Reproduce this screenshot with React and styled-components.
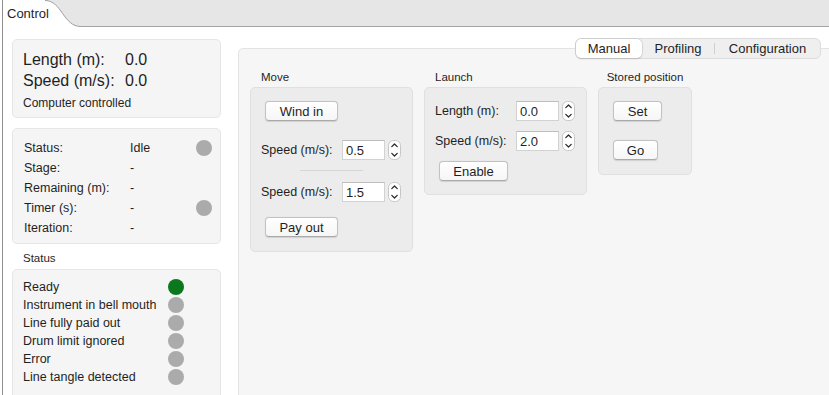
import React from 'react';
import styled, { createGlobalStyle } from 'styled-components';

const GlobalStyle = createGlobalStyle`
  html, body {
    margin: 0;
    padding: 0;
    background: #fff;
    overflow: hidden;
  }
  body {
    font-family: "Liberation Sans", Arial, sans-serif;
    color: #1f1f1f;
  }
  * { box-sizing: border-box; }
`;

const Window = styled.div`
  display: flex;
  flex-direction: column;
  height: 100vh;
  margin-left: 2px;
  border-left: 1px solid #8e8e8e;
`;

const TabStrip = styled.div`
  display: flex;
  height: 27px;
  background: #e6e6e6;
  flex-shrink: 0;
`;

const ActiveTab = styled.div`
  position: relative;
  z-index: 1;
  width: 42px;
  background: #fff;
  padding-left: 4px;
  font-size: 13px;
  line-height: 28px;
  white-space: nowrap;
`;

const TabFiller = styled.div`
  flex: 1;
  border-bottom: 1px solid #a3a3a3;
`;

const Content = styled.div`
  flex: 1;
  display: flex;
  gap: 17px;
  padding: 12px 0 0 9px;
  min-height: 0;
`;

const LeftColumn = styled.div`
  width: 209px;
  display: flex;
  flex-direction: column;
  gap: 10px;
`;

const Card = styled.div`
  background: #f5f5f5;
  border: 1px solid #e6e6e6;
  border-radius: 5px;
  padding: ${({ $pad }) => $pad};
  ${({ $grow }) => $grow && 'flex: 1; margin-bottom: -12px;'}
`;

const Readout = styled.div`
  display: grid;
  grid-template-columns: 102px auto;
  font-size: 16px;
  line-height: 21px;
`;

const Note = styled.div`
  font-size: 12px;
  line-height: 15px;
  margin-top: 5px;
`;

const InfoGrid = styled.div`
  display: grid;
  grid-template-columns: 106px 1fr 16px;
  grid-auto-rows: 20px;
  align-items: center;
  font-size: 12.5px;
`;

const Dot = styled.span`
  display: block;
  width: 16px;
  height: 16px;
  border-radius: 50%;
  background: ${({ $on }) => ($on ? '#0b781d' : '#ababab')};
`;

const SectionLabel = styled.div`
  font-size: 11.5px;
  line-height: 14px;
  padding-left: 11px;
  margin: -3px 0 -6px;
`;

const FlagGrid = styled.div`
  display: grid;
  grid-template-columns: 145px 16px;
  grid-auto-rows: 18px;
  align-items: center;
  font-size: 12.5px;
`;

const MainPanel = styled.div`
  flex: 1;
  margin: 9px -8px -12px 0;
  background: #f6f6f6;
  border: 1px solid #e3e3e3;
  border-radius: 5px;
  display: flex;
  flex-direction: column;
`;

const TopBar = styled.div`
  display: flex;
  justify-content: flex-end;
  margin-top: -11px;
  padding-right: 15px;
`;

const Segmented = styled.div`
  display: flex;
  align-items: center;
  height: 21px;
  background: #efefef;
  border: 1px solid #dcdcdc;
  border-radius: 6px;
`;

const Segment = styled.div`
  width: ${({ $w }) => $w}px;
  height: 19px;
  line-height: 19px;
  text-align: center;
  font-size: 13px;
  border-radius: 5px;
  ${({ $active }) =>
    $active &&
    `
    background: #fff;
    box-shadow: 0 0 0 0.5px #c4c4c4, 0 1px 1.5px rgba(0, 0, 0, 0.18);
  `}
`;

const SegmentDivider = styled.span`
  width: 1px;
  height: 11px;
  background: #cfcfcf;
`;

const Groups = styled.div`
  display: flex;
  align-items: flex-start;
  gap: 11px;
  padding: 11px 11px 0;
`;

const Group = styled.div`
  display: flex;
  flex-direction: column;
`;

const GroupLabel = styled.div`
  font-size: 11.5px;
  line-height: 14px;
  margin-bottom: 3px;
  padding-left: ${({ $center }) => ($center ? '0' : '11px')};
  text-align: ${({ $center }) => ($center ? 'center' : 'left')};
`;

const GroupBox = styled.div`
  width: ${({ $w }) => $w}px;
  background: #ececec;
  border: 1px solid #e0e0e0;
  border-radius: 5px;
  padding: 13px 10px ${({ $pb }) => $pb || 14}px;
  display: flex;
  flex-direction: column;
  align-items: flex-start;
`;

const Button = styled.button`
  width: ${({ $w }) => $w}px;
  height: 20px;
  margin: ${({ $mt }) => $mt || 0}px 0 0 4px;
  padding: 0;
  font-family: inherit;
  font-size: 13px;
  color: #1f1f1f;
  background: linear-gradient(#ffffff, #f6f6f6);
  border: 1px solid #c2c2c2;
  border-bottom-color: #aaaaaa;
  border-radius: 4px;
  box-shadow: 0 0.5px 1px rgba(0, 0, 0, 0.12);
`;

const FieldRow = styled.div`
  display: flex;
  align-items: center;
  margin-top: ${({ $mt }) => $mt || 0}px;
`;

const FieldLabel = styled.span`
  width: 81px;
  font-size: 12.5px;
`;

const NumberBox = styled.div`
  width: 43px;
  height: 20px;
  background: #fff;
  border: 1px solid #d2d2d2;
  border-top-color: #bdbdbd;
  padding: 0 3px;
  font-size: 13px;
  line-height: 19px;
`;

const Divider = styled.div`
  align-self: center;
  width: 63px;
  height: 1px;
  background: #d6d6d6;
  margin-top: 10px;
`;

const Stepper = () => (
  <svg width="13" height="20" viewBox="0 0 13 20" style={{ marginLeft: 3 }}>
    <rect x="0.5" y="0.5" width="12" height="19" rx="5" fill="#fff" stroke="#c6c6c6" />
    <path d="M3.8 6.6 L6.5 4 L9.2 6.6" fill="none" stroke="#2a2a2a" strokeWidth="1.3" strokeLinecap="round" strokeLinejoin="round" />
    <path d="M3.8 13.4 L6.5 16 L9.2 13.4" fill="none" stroke="#2a2a2a" strokeWidth="1.3" strokeLinecap="round" strokeLinejoin="round" />
  </svg>
);

const TabCurve = () => (
  <svg width="36" height="27" viewBox="0 0 36 27">
    <path d="M0 0 C17 0 18 26 36 26 V27 H0 Z" fill="#fff" />
    <path d="M0 0.5 C17 0.5 18 26.5 36 26.5" fill="none" stroke="#9c9c9c" />
  </svg>
);

const Field = ({ label, value, mt }) => (
  <FieldRow $mt={mt}>
    <FieldLabel>{label}</FieldLabel>
    <NumberBox>{value}</NumberBox>
    <Stepper />
  </FieldRow>
);

const info = [
  ['Status:', 'Idle', true],
  ['Stage:', '-', false],
  ['Remaining (m):', '-', false],
  ['Timer (s):', '-', true],
  ['Iteration:', '-', false],
];

const flags = [
  ['Ready', true],
  ['Instrument in bell mouth', false],
  ['Line fully paid out', false],
  ['Drum limit ignored', false],
  ['Error', false],
  ['Line tangle detected', false],
];

export default function App() {
  return (
    <>
      <GlobalStyle />
      <Window>
        <TabStrip>
          <ActiveTab>Control</ActiveTab>
          <TabCurve />
          <TabFiller />
        </TabStrip>
        <Content>
          <LeftColumn>
            <Card $pad="9px 10px 6px">
              <Readout>
                <span>Length (m):</span>
                <span>0.0</span>
                <span>Speed (m/s):</span>
                <span>0.0</span>
              </Readout>
              <Note>Computer controlled</Note>
            </Card>
            <Card $pad="9px 8px 5px 11px">
              <InfoGrid>
                {info.map(([label, value, dot]) => (
                  <React.Fragment key={label}>
                    <span>{label}</span>
                    <span>{value}</span>
                    {dot ? <Dot /> : <span />}
                  </React.Fragment>
                ))}
              </InfoGrid>
            </Card>
            <SectionLabel>Status</SectionLabel>
            <Card $pad="8px 10px" $grow>
              <FlagGrid>
                {flags.map(([label, on]) => (
                  <React.Fragment key={label}>
                    <span>{label}</span>
                    <Dot $on={on} />
                  </React.Fragment>
                ))}
              </FlagGrid>
            </Card>
          </LeftColumn>
          <MainPanel>
            <TopBar>
              <Segmented>
                <Segment $w={66} $active>Manual</Segment>
                <Segment $w={72}>Profiling</Segment>
                <SegmentDivider />
                <Segment $w={105}>Configuration</Segment>
              </Segmented>
            </TopBar>
            <Groups>
              <Group>
                <GroupLabel>Move</GroupLabel>
                <GroupBox $w={163}>
                  <Button $w={73}>Wind in</Button>
                  <Field label="Speed (m/s):" value="0.5" mt={19} />
                  <Divider />
                  <Field label="Speed (m/s):" value="1.5" mt={11} />
                  <Button $w={73} $mt={15}>Pay out</Button>
                </GroupBox>
              </Group>
              <Group>
                <GroupLabel>Launch</GroupLabel>
                <GroupBox $w={163} $pb={13}>
                  <Field label="Length (m):" value="0.0" />
                  <Field label="Speed (m/s):" value="2.0" mt={10} />
                  <Button $w={69} $mt={10}>Enable</Button>
                </GroupBox>
              </Group>
              <Group>
                <GroupLabel $center>Stored position</GroupLabel>
                <GroupBox $w={94}>
                  <Button $w={49}>Set</Button>
                  <Button $w={45} $mt={19}>Go</Button>
                </GroupBox>
              </Group>
            </Groups>
          </MainPanel>
        </Content>
      </Window>
    </>
  );
}
